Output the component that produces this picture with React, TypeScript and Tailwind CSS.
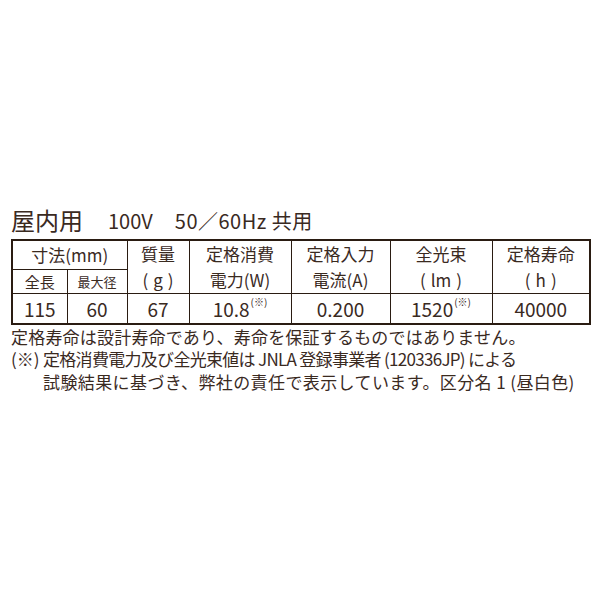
import React from 'react';

const font = { fontFamily: '"Noto Sans CJK JP", "Noto Sans", sans-serif' };

const Sup = () => <span className="align-top text-[10px] relative top-[-2px] ml-[1px]">(※)</span>;

const Unit = ({ u }: { u: string }) => (
  <span>
    (<span className="px-[5px]">{u}</span>)
  </span>
);

export default function App() {
  return (
    <div className="w-[600px] h-[600px] bg-white text-[#3a2a1f]" style={font}>
      <div className="pt-[203px] pl-[11px]">
        {/* Title */}
        <div className="flex items-end h-[32px]">
          <span className="text-[24px] leading-[30px]">屋内用</span>
          <span className="text-[20px] leading-[28px] ml-[25px]">100V</span>
          <span className="text-[20px] leading-[28px] ml-[22px] tracking-[0.5px]">50／60Hz 共用</span>
        </div>

        {/* Spec table */}
        <table className="mt-[4px] border-collapse border-2 border-[#2a1c12] text-center table-fixed w-[578px]">
          <colgroup>
            <col className="w-[55px]" />
            <col className="w-[60px]" />
            <col className="w-[62px]" />
            <col className="w-[102px]" />
            <col className="w-[99px]" />
            <col className="w-[102px]" />
            <col className="w-[98px]" />
          </colgroup>
          <tbody>
            <tr className="h-[29px]">
              <td colSpan={2} className="border-[1.5px] border-[#2a1c12] text-[17px] leading-none">寸法(mm)</td>
              <td rowSpan={2} className="border-[1.5px] border-[#2a1c12] text-[17px] leading-[26px]">質量<br /><Unit u="g" /></td>
              <td rowSpan={2} className="border-[1.5px] border-[#2a1c12] text-[17px] leading-[26px]">定格消費<br />電力(W)</td>
              <td rowSpan={2} className="border-[1.5px] border-[#2a1c12] text-[17px] leading-[26px]">定格入力<br />電流(A)</td>
              <td rowSpan={2} className="border-[1.5px] border-[#2a1c12] text-[17px] leading-[26px]">全光束<br /><Unit u="lm" /></td>
              <td rowSpan={2} className="border-[1.5px] border-[#2a1c12] text-[17px] leading-[26px]">定格寿命<br /><Unit u="h" /></td>
            </tr>
            <tr className="h-[24px]">
              <td className="border-[1.5px] border-[#2a1c12] text-[15px] leading-none">全長</td>
              <td className="border-[1.5px] border-[#2a1c12] text-[13px] leading-none">最大径</td>
            </tr>
            <tr className="h-[30px] text-[19px]">
              <td className="border-[1.5px] border-[#2a1c12] leading-none">115</td>
              <td className="border-[1.5px] border-[#2a1c12] leading-none">60</td>
              <td className="border-[1.5px] border-[#2a1c12] leading-none">67</td>
              <td className="border-[1.5px] border-[#2a1c12] leading-none">10.8<Sup /></td>
              <td className="border-[1.5px] border-[#2a1c12] leading-none">0.200</td>
              <td className="border-[1.5px] border-[#2a1c12] leading-none">1520<Sup /></td>
              <td className="border-[1.5px] border-[#2a1c12] leading-none">40000</td>
            </tr>
          </tbody>
        </table>

        {/* Notes */}
        <div className="mt-[1px] text-[17px] leading-[22.5px]">
          <p className="tracking-[0.2px]">定格寿命は設計寿命であり、寿命を保証するものではありません。</p>
          <div className="flex">
            <span className="w-[32px] shrink-0">(※)</span>
            <span className="tracking-[-0.7px]">定格消費電力及び全光束値は JNLA 登録事業者 (120336JP) による</span>
          </div>
          <p className="pl-[32px] tracking-[0.4px]">試験結果に基づき、弊社の責任で表示しています。区分名 1 (昼白色)</p>
        </div>
      </div>
    </div>
  );
}
